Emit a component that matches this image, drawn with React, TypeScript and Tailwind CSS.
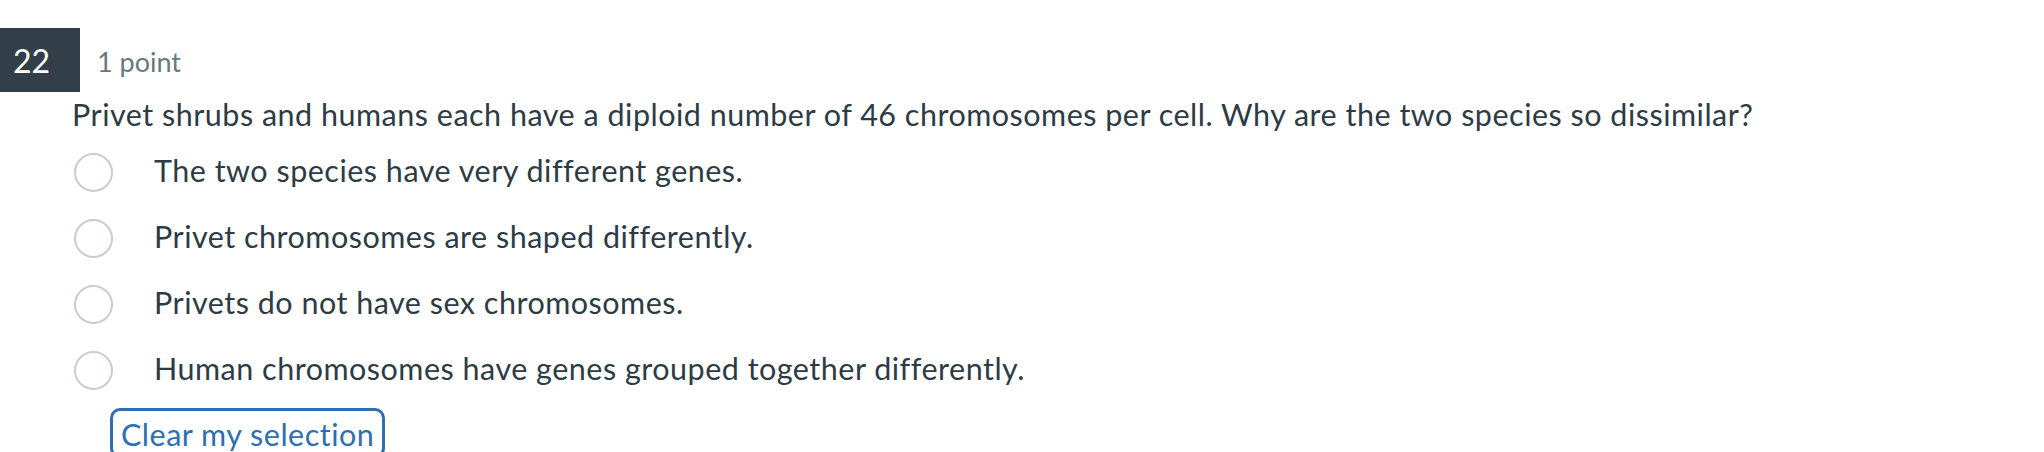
import React, { useState } from 'react';

type Answer = { id: string; label: string };

const answers: Answer[] = [
  { id: 'a', label: 'The two species have very different genes.' },
  { id: 'b', label: 'Privet chromosomes are shaped differently.' },
  { id: 'c', label: 'Privets do not have sex chromosomes.' },
  { id: 'd', label: 'Human chromosomes have genes grouped together differently.' },
];

const font = { fontFamily: 'Lato, "Open Sans", sans-serif' };

const App: React.FC = () => {
  const [selected, setSelected] = useState<string | null>(null);

  return (
    <div className="w-[2044px] h-[452px] overflow-hidden bg-white text-[#2d3b45]" style={font}>
      <div className="pt-[28px]">
        <div className="flex items-center h-[64px]">
          <div className="w-[80px] h-[64px] bg-[#323e48] text-white text-[32px] leading-none flex items-center pl-[13px] pt-[2px]">
            22
          </div>
          <span className="ml-[17px] text-[27px] leading-none text-[#6b7780] pt-[2px]">1 point</span>
        </div>

        <div className="pl-[72px] text-[30.5px] leading-[42px] tracking-[0.5px]">
          <p className="mt-[1px]">
            Privet shrubs and humans each have a diploid number of 46 chromosomes per cell. Why are the two species so dissimilar?
          </p>

          <div className="mt-[14px] flex flex-col">
            {answers.map((a) => (
              <label key={a.id} className="flex items-start h-[66px] cursor-pointer">
                <span
                  onClick={() => setSelected(a.id)}
                  className={`mt-[4px] ml-[2px] w-[39px] h-[39px] rounded-full border-2 shrink-0 flex items-center justify-center ${
                    selected === a.id ? 'border-[#2d6fb0]' : 'border-[#c7cdd1]'
                  }`}
                >
                  {selected === a.id && <span className="w-[19px] h-[19px] rounded-full bg-[#2d6fb0]" />}
                </span>
                <span className="ml-[41px]">{a.label}</span>
              </label>
            ))}
          </div>

          <button
            onClick={() => setSelected(null)}
            className="mt-[-7px] ml-[38px] border-[3px] border-[#2d6fb0] rounded-[10px] pl-[8px] pr-[8px] pt-[2px] text-[#2d6fb0]"
          >
            Clear my selection
          </button>
        </div>
      </div>
    </div>
  );
};

export default App;
